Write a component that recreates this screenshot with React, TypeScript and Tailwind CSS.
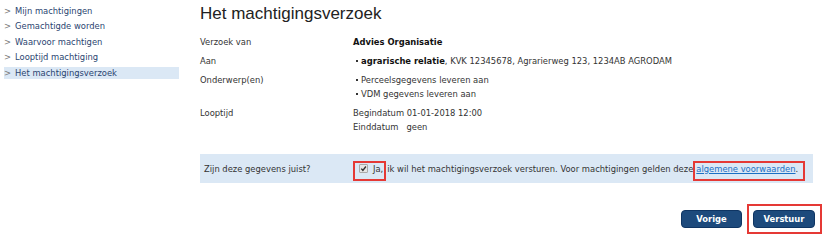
const NAV = [
  "Mijn machtigingen",
  "Gemachtigde worden",
  "Waarvoor machtigen",
  "Looptijd machtiging",
  "Het machtigingsverzoek",
];

const verdana = "font-['Verdana','DejaVu_Sans',sans-serif]";

function Row({ label, children }: { label: string; children: React.ReactNode }) {
  return (
    <div className="flex">
      <div className="w-[153px] shrink-0">{label}</div>
      <div>{children}</div>
    </div>
  );
}

function Bullet({ children }: { children: React.ReactNode }) {
  return (
    <div className="flex items-center">
      <span className="ml-[3px] mr-[3px] h-[2px] w-[2px] bg-[#333]" />
      <span>{children}</span>
    </div>
  );
}

export default function App() {
  return (
    <div
      className={`flex h-[235px] w-[822px] overflow-hidden whitespace-nowrap bg-white text-[8.4px] leading-[14px] text-[#333] ${verdana}`}
    >
      {/* Side navigation */}
      <ul className="ml-[4px] mt-[5px] flex w-[175px] shrink-0 flex-col gap-[3.4px]">
        {NAV.map((item, i) => (
          <li
            key={item}
            className={`flex h-[12px] items-center gap-[4px] text-[#2a4470] ${
              i === NAV.length - 1 ? "bg-[#dbe8f5]" : ""
            }`}
          >
            <span className="text-[#777]">&gt;</span>
            {item}
          </li>
        ))}
      </ul>

      {/* Main content */}
      <div className="ml-[21px] flex flex-1 flex-col pr-[9px]">
        <h1 className="mt-[3.5px] font-['Liberation_Sans',Arial,sans-serif] text-[17px] leading-[20px] text-[#222]">
          Het machtigingsverzoek
        </h1>

        <div className="mt-[11.5px] flex flex-col gap-[5px]">
          <Row label="Verzoek van">
            <b className="text-[#111]">Advies Organisatie</b>
          </Row>
          <Row label="Aan">
            <Bullet>
              <b className="text-[#111]">agrarische relatie</b>, KVK 12345678, Agrarierweg 123, 1234AB AGRODAM
            </Bullet>
          </Row>
          <Row label="Onderwerp(en)">
            <Bullet>Perceelsgegevens leveren aan</Bullet>
            <Bullet>VDM gegevens leveren aan</Bullet>
          </Row>
          <Row label="Looptijd">
            <div>Begindatum 01-01-2018 12:00</div>
            <div>Einddatum&nbsp;&nbsp;&nbsp;geen</div>
          </Row>
        </div>

        {/* Confirmation band */}
        <div className="mt-[20px] flex h-[29px] items-center bg-[#dbe8f5] pl-[4px]">
          <div className="w-[149px] shrink-0">Zijn deze gegevens juist?</div>
          <div className="flex items-center">
            <span className="flex h-[20px] translate-y-[2px] items-center border-2 border-[#e53935] pl-[4px] pr-[1px]">
              <span className="flex -translate-y-[2px] items-center">
                <span className="flex h-[9px] w-[9px] items-center justify-center rounded-[1px] border border-[#aaa] bg-[#e6e6e6]">
                  <svg viewBox="0 0 10 10" className="h-[7px] w-[7px]">
                    <path d="M1.8 5.2 L4.1 7.6 L8.4 2.2" fill="none" stroke="#333" strokeWidth="2" />
                  </svg>
                </span>
                <span className="ml-[5px]">Ja,</span>
              </span>
            </span>
            <span className="ml-[1px]">
              ik wil het machtigingsverzoek versturen. Voor machtigingen gelden deze
            </span>
            <span className="flex h-[20px] translate-y-[2px] items-center border-2 border-[#e53935] pl-[1px] pr-[5px]">
              <span className="-translate-y-[2px]">
                <a className="text-[#1a6fc4] underline">algemene voorwaarden</a>.
              </span>
            </span>
          </div>
        </div>

        {/* Buttons */}
        <div className="-mr-[9px] mt-[21px] flex items-center justify-end gap-[5px]">
          <button className="h-[18px] w-[61px] rounded-[4px] border border-[#0f3563] bg-[#1d4a7c] text-[8.4px] font-bold text-white">
            Vorige
          </button>
          <div className="flex h-[30px] w-[75px] items-center border-2 border-[#e53935] pl-[4px]">
            <button className="h-[18px] w-[62px] rounded-[4px] border border-[#0f3563] bg-[#1d4a7c] text-[8.4px] font-bold text-white">
              Verstuur
            </button>
          </div>
        </div>
      </div>
    </div>
  );
}
